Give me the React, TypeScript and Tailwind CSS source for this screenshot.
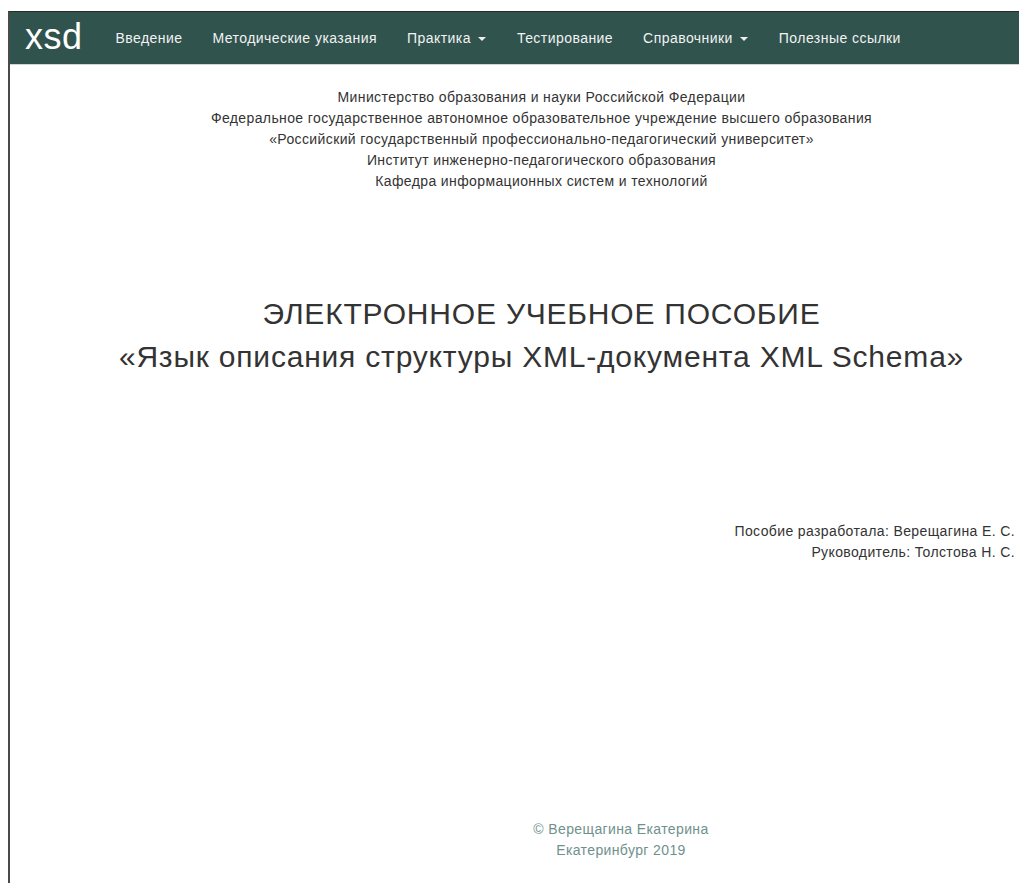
import React from "react";

const navItems: { label: string; caret?: boolean }[] = [
  { label: "Введение" },
  { label: "Методические указания" },
  { label: "Практика", caret: true },
  { label: "Тестирование" },
  { label: "Справочники", caret: true },
  { label: "Полезные ссылки" },
];

const header = [
  "Министерство образования и науки Российской Федерации",
  "Федеральное государственное автономное образовательное учреждение высшего образования",
  "«Российский государственный профессионально-педагогический университет»",
  "Институт инженерно-педагогического образования",
  "Кафедра информационных систем и технологий",
];

function Caret() {
  return (
    <span className="ml-[7px] mr-[1px] inline-block h-0 w-0 border-x-[4px] border-t-[4px] border-x-transparent border-t-[#eeeeee] align-middle" />
  );
}

export default function App() {
  return (
    <div
      className="min-h-screen bg-white pt-[11px] pl-[8px] text-[#333333]"
      style={{ fontFamily: '"Liberation Sans", Arial, sans-serif' }}
    >
      <div className="min-h-[872px] border-t border-l-2 border-t-[#2a2a2a] border-l-[#4a4a4a]">
        <nav className="flex h-[53px] items-center border-b border-[#cbd8d5] bg-[#30534e]">
          <a className="pl-[15px] pr-[18px] text-[36px] leading-[40px] tracking-[0.5px] text-white -mt-[3px]">xsd</a>
          <ul className="flex items-center">
            {navItems.map((item) => (
              <li key={item.label} className="px-[15px] text-[14px] leading-[20px] tracking-[0.45px] text-[#f2f2f2]">
                {item.label}
                {item.caret && <Caret />}
              </li>
            ))}
          </ul>
        </nav>

        <main className="tracking-[0.38px]">
          <div className="mt-[22px] pl-[54px] text-center text-[14px] leading-[21px]">
            {header.map((line) => (
              <p key={line}>{line}</p>
            ))}
          </div>

          <h1 className="mt-[100px] pl-[54px] text-center text-[30px] leading-[43px] font-normal tracking-[0.8px]">
            ЭЛЕКТРОННОЕ УЧЕБНОЕ ПОСОБИЕ
            <br />
            «Язык описания структуры XML-документа XML Schema»
          </h1>

          <div className="mt-[143px] pr-[4px] text-right text-[14px] leading-[21px]">
            <p>Пособие разработала: Верещагина Е. С.</p>
            <p>Руководитель: Толстова Н. С.</p>
          </div>

          <footer className="mt-[256px] pl-[213px] text-center text-[14px] leading-[21px] text-[#6f918c]">
            <p>© Верещагина Екатерина</p>
            <p>Екатеринбург 2019</p>
          </footer>
        </main>
      </div>
    </div>
  );
}
